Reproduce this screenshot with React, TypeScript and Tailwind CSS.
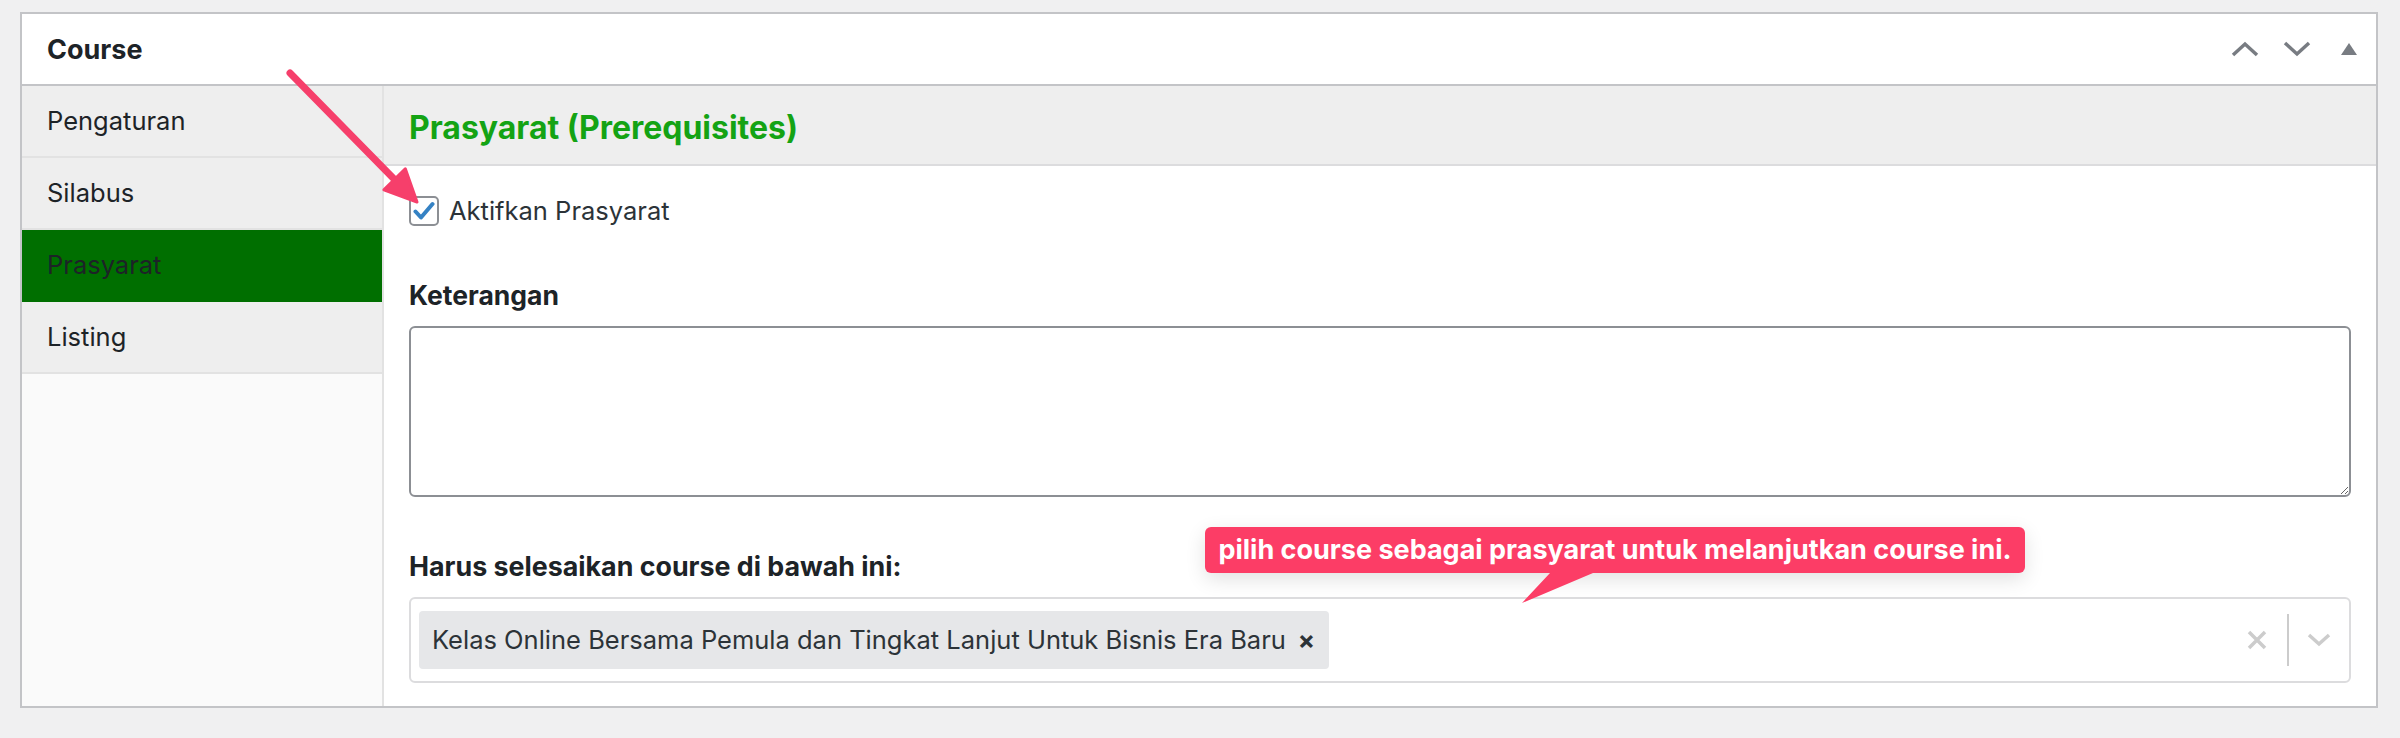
import React from 'react';

const tabs = ['Pengaturan', 'Silabus', 'Prasyarat', 'Listing'];

const App: React.FC = () => {
  return (
    <div className="relative h-[738px] w-[2400px] overflow-hidden bg-[#f0f0f1] pl-[20px] pt-[12px] font-['Inter',sans-serif] text-[#1d2327]">
      {/* Metabox */}
      <div className="w-[2358px] border-2 border-[#c3c4c7] bg-white">
        <div className="flex h-[72px] items-center justify-between border-b-2 border-[#c3c4c7] pl-[25px] pr-[1px]">
          <h2 className="text-[27px] font-bold leading-none">Course</h2>
          <div className="flex items-center">
            <span className="flex h-[52px] w-[52px] items-center justify-center">
              <svg width="28" height="16" viewBox="0 0 28 16" fill="none">
                <path d="M2 14 L14 3 L26 14" stroke="#787c82" strokeWidth="3.5" />
              </svg>
            </span>
            <span className="flex h-[52px] w-[52px] items-center justify-center">
              <svg width="28" height="16" viewBox="0 0 28 16" fill="none">
                <path d="M2 2 L14 13 L26 2" stroke="#787c82" strokeWidth="3.5" />
              </svg>
            </span>
            <span className="flex h-[52px] w-[52px] items-center justify-center">
              <svg width="16" height="12" viewBox="0 0 16 12">
                <polygon points="8,0 16,12 0,12" fill="#787c82" />
              </svg>
            </span>
          </div>
        </div>

        <div className="flex">
          {/* Tabs */}
          <ul className="w-[362px] shrink-0 border-r-2 border-[#e2e2e2] bg-[#fafafa]">
            {tabs.map((t) => (
              <li
                key={t}
                className={
                  t === 'Prasyarat'
                    ? 'flex h-[72px] items-center border-b-2 border-[#006f00] bg-[#006f00] pl-[25px] text-[25.5px]'
                    : 'flex h-[72px] items-center border-b-2 border-[#e2e2e2] bg-[#eeeeee] pl-[25px] text-[25.5px]'
                }
              >
                {t}
              </li>
            ))}
          </ul>

          {/* Panel */}
          <div className="min-w-0 flex-1">
            <div className="flex h-[80px] items-center border-b-2 border-[#dcdcde] bg-[#eeeeee] pl-[25px] pt-[6px]">
              <h3 className="text-[32px] font-bold leading-none text-[#14a314]">Prasyarat (Prerequisites)</h3>
            </div>

            <div className="px-[25px] pb-[23px] pt-[30px]">
              <label className="flex items-center gap-[10px] text-[25.5px] leading-[30px] text-[#2c3338]">
                <span className="flex h-[30px] w-[30px] items-center justify-center rounded-[5px] border-2 border-[#8c8f94] bg-white">
                  <svg width="22" height="20" viewBox="0 0 22 20" fill="none">
                    <path d="M2.5 10.5 L8 16.5 L19.5 3" stroke="#3582c4" strokeWidth="4" strokeLinecap="round" strokeLinejoin="round" />
                  </svg>
                </span>
                Aktifkan Prasyarat
              </label>

              <p className="mt-[53px] text-[26.5px] font-bold leading-[32px]">Keterangan</p>
              <textarea className="mt-[15px] block h-[171px] w-full rounded-[6px] border-2 border-[#8c8f94] bg-white" />

              <p className="mt-[53px] text-[26.8px] font-bold leading-[32px]">Harus selesaikan course di bawah ini:</p>
              <div className="mt-[15px] flex h-[86px] items-center rounded-[6px] border-2 border-[#dcdcde] bg-white pl-[8px]">
                <div className="flex h-[58px] items-center gap-[12px] rounded-[4px] bg-[#e6e7e9] pl-[13px] pr-[14px] text-[25.5px] text-[#2c3338]">
                  Kelas Online Bersama Pemula dan Tingkat Lanjut Untuk Bisnis Era Baru
                  <span className="font-bold text-[#2c3338]">×</span>
                </div>
                <div className="ml-auto flex items-center">
                  <svg width="20" height="20" viewBox="0 0 20 20" fill="none">
                    <path d="M2 2 L18 18 M18 2 L2 18" stroke="#cccccc" strokeWidth="3.5" />
                  </svg>
                  <span className="ml-[20px] h-[52px] w-[2px] bg-[#cccccc]" />
                  <svg className="ml-[18px] mr-[18px]" width="24" height="14" viewBox="0 0 24 14" fill="none">
                    <path d="M2 2 L12 11 L22 2" stroke="#cccccc" strokeWidth="3.5" />
                  </svg>
                </div>
              </div>
            </div>
          </div>
        </div>
      </div>

      {/* Annotation arrow */}
      <svg className="pointer-events-none absolute left-[270px] top-[55px]" width="170" height="170" viewBox="0 0 170 170">
        <line x1="20" y1="18" x2="126" y2="126" stroke="#f63f6b" strokeWidth="7" strokeLinecap="round" />
        <polygon points="147,147 113.9,134.8 135.3,113.8" fill="#f63f6b" stroke="#f63f6b" strokeWidth="3" strokeLinejoin="round" />
      </svg>

      {/* Tooltip */}
      <div className="absolute left-[1205px] top-[527px] flex h-[46px] w-[820px] items-center justify-center rounded-[6px] bg-[#fc3d66] text-[27px] font-bold text-white shadow-[0_6px_20px_rgba(0,0,0,0.12)]">
        pilih course sebagai prasyarat untuk melanjutkan course ini.
        <svg className="absolute left-[305px] top-[44px]" width="90" height="34" viewBox="0 0 90 34">
          <polygon points="40,0 83,0 83,2 12,32 40,2" fill="#fc3d66" />
        </svg>
      </div>
    </div>
  );
};

export default App;
